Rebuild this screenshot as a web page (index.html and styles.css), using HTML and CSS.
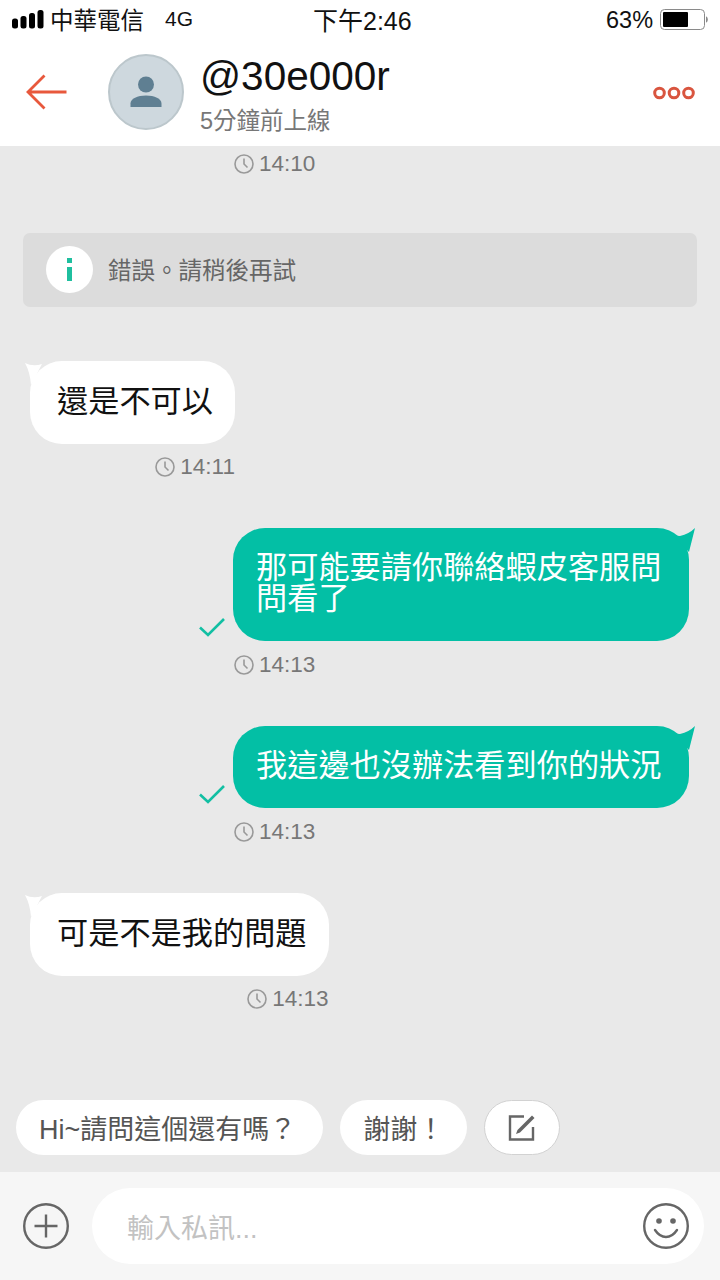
FILE: index.html
```html
<!DOCTYPE html>
<html lang="zh-Hant">
<head>
  <meta charset="UTF-8" />
  <title>@30e000r</title>
  <link rel="stylesheet" href="styles.css">
</head>
<body>
  <header class="top">
    <div class="status">
      <svg class="signal" width="33" height="20" viewBox="0 0 33 20">
        <rect x="0" y="9.500" width="6" height="10" rx="2.500"/>
        <rect x="8.500" y="7" width="6" height="12.500" rx="2.500"/>
        <rect x="17" y="4" width="6" height="15.500" rx="2.500"/>
        <rect x="25.500" y="1" width="6" height="18.500" rx="2.500"/>
      </svg>
      <span class="carrier">中華電信</span>
      <span class="network">4G</span>
      <span class="clock-time">下午2:46</span>
      <span class="percent">63%</span>
      <svg class="battery" width="50" height="21" viewBox="0 0 50 21">
        <rect x="1.500" y="0.500" width="44" height="20" rx="4" fill="none" stroke="#8a8a8a"/>
        <rect x="4" y="3" width="25" height="15" rx="1" fill="#000"/>
        <path d="M47 7.500c1.200.3 1.800 1.400 1.800 3s-.6 2.700-1.800 3z" fill="#8a8a8a"/>
      </svg>
    </div>
    <nav class="nav">
      <svg class="back" width="42" height="36" viewBox="0 0 42 36">
        <path d="M40.500 18H2M18.500 1.500 2 18l16.500 16.500" fill="none" stroke="#e8583c" stroke-width="2.800"/>
      </svg>
      <div class="avatar">
        <svg width="36" height="36" viewBox="0 0 36 36">
          <circle cx="18" cy="10.500" r="8" fill="#5f7f92"/>
          <path d="M2.500 33v-3.500c0-5 7-8 15.500-8s15.500 3 15.500 8V33z" fill="#5f7f92"/>
        </svg>
      </div>
      <div class="who">
        <div class="who-name">@30e000r</div>
        <div class="who-seen">5分鐘前上線</div>
      </div>
      <svg class="more" width="44" height="14" viewBox="0 0 44 14">
        <g fill="none" stroke="#d9553f" stroke-width="3">
          <circle cx="7.500" cy="7" r="4.800"/>
          <circle cx="22" cy="7" r="4.800"/>
          <circle cx="36.500" cy="7" r="4.800"/>
        </g>
      </svg>
    </nav>
  </header>

  <main class="chat">
    <div class="stamp stamp-first">
      <svg class="clock" width="20" height="20" viewBox="0 0 20 20"><circle cx="10" cy="10" r="9"/><path d="M10 4.500V10l3.500 3.500"/></svg>14:10
    </div>

    <div class="notice">
      <div class="notice-icon">
        <svg width="5" height="23" viewBox="0 0 5 23">
          <rect x="0" y="0" width="5" height="5" fill="#1fbf9f"/>
          <rect x="0" y="9" width="5" height="14" fill="#1fbf9f"/>
        </svg>
      </div>
      <span class="notice-text">錯誤。請稍後再試</span>
    </div>

    <div class="msg msg-in">
      <div class="bubble">
        <svg class="tail" width="18" height="24" viewBox="0 0 18 24"><path d="M1 1Q9 5 18 2L7 23Q6 10 1 1z"/></svg>
        還是不可以
      </div>
      <div class="stamp">
        <svg class="clock" width="20" height="20" viewBox="0 0 20 20"><circle cx="10" cy="10" r="9"/><path d="M10 4.500V10l3.500 3.500"/></svg>14:11
      </div>
    </div>

    <div class="msg msg-out">
      <svg class="check" width="26" height="20" viewBox="0 0 26 20"><path d="M1 10.500 9 18 25 2" fill="none" stroke="#12bfa3" stroke-width="2.600"/></svg>
      <div class="bubble">
        <svg class="tail" width="28" height="24" viewBox="0 0 28 24"><path d="M0 2Q8 8 13 8 22 6 28 0 25 12 22 24z"/></svg>
        那可能要請你聯絡蝦皮客服問問看了
      </div>
      <div class="stamp">
        <svg class="clock" width="20" height="20" viewBox="0 0 20 20"><circle cx="10" cy="10" r="9"/><path d="M10 4.500V10l3.500 3.500"/></svg>14:13
      </div>
    </div>

    <div class="msg msg-out">
      <svg class="check" width="26" height="20" viewBox="0 0 26 20"><path d="M1 10.500 9 18 25 2" fill="none" stroke="#12bfa3" stroke-width="2.600"/></svg>
      <div class="bubble">
        <svg class="tail" width="28" height="24" viewBox="0 0 28 24"><path d="M0 2Q8 8 13 8 22 6 28 0 25 12 22 24z"/></svg>
        我這邊也沒辦法看到你的狀況
      </div>
      <div class="stamp">
        <svg class="clock" width="20" height="20" viewBox="0 0 20 20"><circle cx="10" cy="10" r="9"/><path d="M10 4.500V10l3.500 3.500"/></svg>14:13
      </div>
    </div>

    <div class="msg msg-in">
      <div class="bubble">
        <svg class="tail" width="18" height="24" viewBox="0 0 18 24"><path d="M1 1Q9 5 18 2L7 23Q6 10 1 1z"/></svg>
        可是不是我的問題
      </div>
      <div class="stamp">
        <svg class="clock" width="20" height="20" viewBox="0 0 20 20"><circle cx="10" cy="10" r="9"/><path d="M10 4.500V10l3.500 3.500"/></svg>14:13
      </div>
    </div>

    <div class="chips">
      <div class="chip chip-long">Hi~請問這個還有嗎？</div>
      <div class="chip">謝謝！</div>
      <div class="chip chip-edit">
        <svg width="28" height="28" viewBox="0 0 28 28">
          <path d="M16 2.500H2v23h23V13" fill="none" stroke="#666" stroke-width="2.400"/>
          <path d="M24 1.500 26.500 4 12 18.500l-4 1.500 1.500-4z" fill="#666"/>
        </svg>
      </div>
    </div>
  </main>

  <footer class="composer">
    <svg width="46" height="46" viewBox="0 0 46 46">
      <g fill="none" stroke="#666" stroke-width="2.400">
        <circle cx="23" cy="23" r="21.800"/>
        <path d="M11.500 23h23M23 11.500v23"/>
      </g>
    </svg>
    <div class="input">
      <span class="placeholder">輸入私訊...</span>
      <svg width="46" height="46" viewBox="0 0 46 46">
        <g fill="none" stroke="#666" stroke-width="2.400">
          <circle cx="23" cy="23" r="21.800"/>
          <path d="M12 27c3 4.500 6.500 7 11 7s8-2.500 11-7" stroke-linecap="round"/>
        </g>
        <circle cx="16" cy="18" r="2.800" fill="#666"/>
        <circle cx="30" cy="18" r="2.800" fill="#666"/>
      </svg>
    </div>
  </footer>
</body>
</html>
```

FILE: styles.css
```css
* {
  box-sizing: border-box;
}
html, body {
  height: 100%;
}
body {
  margin: 0;
  width: 720px;
  height: 1280px;
  display: flex;
  flex-direction: column;
  overflow: hidden;
  background: #e9e9e9;
  font-family: "Liberation Sans", "Noto Sans CJK TC", sans-serif;
  color: #111;
}

/* top: status + nav */
.top {
  height: 146px;
  background: #fff;
}
.status {
  height: 40px;
  display: flex;
  align-items: center;
  padding: 0 0 3px 12px;
  font-size: 23.500px;
}
.carrier {
  margin-left: 5px;
}
.network {
  margin-left: 21px;
  font-size: 21px;
  width: 148px;
}
.clock-time {
  width: 293px;
  font-size: 25px;
}
.percent {
  width: 53px;
  margin-top: 3px;
}
.battery {
  margin-top: 2px;
}
.nav {
  height: 106px;
  display: flex;
  align-items: center;
  padding-left: 26px;
}
.back {
  margin-top: -2px;
}
.avatar {
  width: 76px;
  height: 76px;
  margin-left: 40px;
  margin-top: -2px;
  border-radius: 50%;
  background: #ced8de;
  border: 2px solid #bcc7cc;
  display: flex;
  align-items: center;
  justify-content: center;
}
.who {
  margin-left: 16px;
  margin-top: 1px;
}
.who-name {
  font-size: 40.500px;
  line-height: 48px;
}
.who-seen {
  font-size: 23.500px;
  line-height: 30px;
  margin-top: 6px;
  color: #777;
}
.more {
  margin-left: auto;
  margin-right: 24px;
  margin-top: -1px;
}

/* chat */
.chat {
  flex: 1;
  display: flex;
  flex-direction: column;
  padding: 4px 31px 17px 30px;
}
.stamp {
  display: flex;
  align-items: center;
  gap: 5px;
  height: 28px;
  font-size: 22.500px;
  color: #777;
}
.stamp-first {
  margin-left: 204px;
}
.clock {
  flex: none;
}
.clock circle, .clock path {
  fill: none;
  stroke: #999;
  stroke-width: 1.600;
}
.notice {
  height: 74px;
  margin: 55px -8px 0 -7px;
  padding: 0 0 1px 23px;
  display: flex;
  align-items: center;
  gap: 15px;
  background: #dcdcdc;
  border-radius: 7px;
  font-size: 23.500px;
  color: #666;
}
.notice-icon {
  width: 47px;
  height: 47px;
  border-radius: 50%;
  background: #fff;
  display: flex;
  align-items: center;
  justify-content: center;
}
.notice-text {
  margin-bottom: 2px;
}
.msg {
  display: grid;
  row-gap: 9px;
}
.bubble {
  position: relative;
  padding: 25px 22px 27px 27px;
  font-size: 31.200px;
  line-height: 31px;
  border-radius: 32px;
}
.tail {
  position: absolute;
}
.msg-in {
  margin-top: 54px;
  align-self: flex-start;
  justify-items: end;
}
.msg + .msg {
  margin-top: 47px;
}
.msg-in .bubble {
  background: #fff;
  justify-self: stretch;
}
.msg-in .tail {
  left: -6px;
  top: 1px;
  fill: #fff;
}
.msg-out {
  grid-template-columns: auto 456px;
  justify-content: end;
  column-gap: 8px;
  row-gap: 10px;
}
.msg-out .bubble {
  background: #03bfa5;
  color: #fff;
  padding: 24px 27px 27px 23px;
}
.msg-out .tail {
  right: -6px;
  top: 0;
  fill: #03bfa5;
}
.msg-out .stamp {
  grid-column: 2;
  justify-self: start;
  margin-left: 1px;
}
.check {
  align-self: end;
  margin-bottom: 4px;
}

/* quick replies */
.chips {
  margin: auto -10px 0 -14px;
  display: flex;
  gap: 17px;
}
.chip {
  height: 55px;
  padding: 0 23px;
  display: flex;
  align-items: center;
  background: #fff;
  border-radius: 28px;
  font-size: 27px;
  color: #555;
}
.chip-long {
  padding-right: 27px;
}
.chip-edit {
  width: 76px;
  padding: 0;
  justify-content: center;
  border: 1px solid #d2d2d2;
}

/* bottom input */
.composer {
  height: 108px;
  background: #f6f6f6;
  display: flex;
  align-items: center;
  gap: 23px;
  padding: 0 16px 0 23px;
}
.input {
  flex: 1;
  height: 76px;
  border-radius: 38px;
  background: #fff;
  display: flex;
  align-items: center;
  justify-content: space-between;
  padding: 0 15px 0 35px;
}
.placeholder {
  font-size: 27px;
  color: #c2c2c2;
}
```
